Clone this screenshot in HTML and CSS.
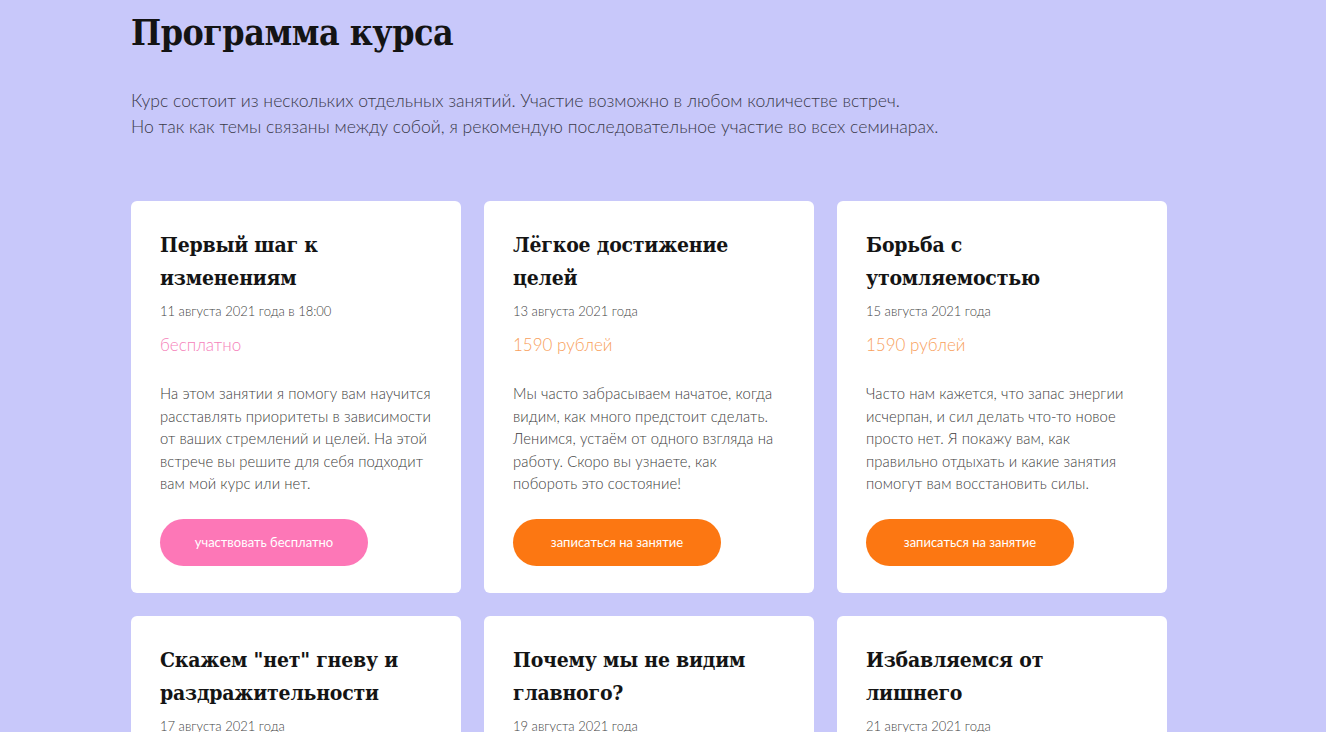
FILE: index.html
```html
<!DOCTYPE html>
<html lang="ru">
<head>
    <meta charset="UTF-8">
    <meta name="viewport" content="width=device-width, initial-scale=1.0">
    <title>Программа курса</title>
    <link rel="stylesheet" href="styles.css">
</head>
<body>
    <section class="program">
        <h1 class="program-title">Программа курса</h1>
        <p class="program-intro">
            Курс состоит из нескольких отдельных занятий. Участие возможно в любом количестве встреч.<br>
            Но так как темы связаны между собой, я рекомендую последовательное участие во всех семинарах.
        </p>

        <div class="lessons">
            <div class="lesson">
                <h3 class="lesson-title">Первый шаг к изменениям</h3>
                <div class="lesson-date">11 августа 2021 года в 18:00</div>
                <div class="lesson-price free">бесплатно</div>
                <p class="lesson-text">На этом занятии я помогу вам научится расставлять приоритеты в зависимости от ваших стремлений и целей. На этой встрече вы решите для себя подходит вам мой курс или нет.</p>
                <a class="lesson-btn free" href="#">участвовать бесплатно</a>
            </div>
            <div class="lesson">
                <h3 class="lesson-title">Лёгкое достижение целей</h3>
                <div class="lesson-date">13 августа 2021 года</div>
                <div class="lesson-price">1590 рублей</div>
                <p class="lesson-text">Мы часто забрасываем начатое, когда видим, как много предстоит сделать. Ленимся, устаём от одного взгляда на работу. Скоро вы узнаете, как побороть это состояние!</p>
                <a class="lesson-btn" href="#">записаться на занятие</a>
            </div>
            <div class="lesson">
                <h3 class="lesson-title">Борьба с утомляемостью</h3>
                <div class="lesson-date">15 августа 2021 года</div>
                <div class="lesson-price">1590 рублей</div>
                <p class="lesson-text">Часто нам кажется, что запас энергии исчерпан, и сил делать что-то новое просто нет. Я покажу вам, как правильно отдыхать и какие занятия помогут вам восстановить силы.</p>
                <a class="lesson-btn" href="#">записаться на занятие</a>
            </div>
            <div class="lesson">
                <h3 class="lesson-title">Скажем "нет" гневу и раздражительности</h3>
                <div class="lesson-date">17 августа 2021 года</div>
                <div class="lesson-price">1590 рублей</div>
                <p class="lesson-text">Раздражение копится день за днём и мешает нам радоваться жизни. Вместе мы разберём, откуда оно берётся и как с ним справиться.</p>
                <a class="lesson-btn" href="#">записаться на занятие</a>
            </div>
            <div class="lesson">
                <h3 class="lesson-title">Почему мы не видим главного?</h3>
                <div class="lesson-date">19 августа 2021 года</div>
                <div class="lesson-price">1590 рублей</div>
                <p class="lesson-text">Мы тратим силы на мелочи и упускаем то, что действительно важно. Научимся отделять главное от второстепенного.</p>
                <a class="lesson-btn" href="#">записаться на занятие</a>
            </div>
            <div class="lesson">
                <h3 class="lesson-title">Избавляемся от лишнего</h3>
                <div class="lesson-date">21 августа 2021 года</div>
                <div class="lesson-price">1590 рублей</div>
                <p class="lesson-text">Лишние дела, вещи и мысли отнимают энергию. На последней встрече мы подведём итоги и наведём порядок.</p>
                <a class="lesson-btn" href="#">записаться на занятие</a>
            </div>
        </div>
    </section>
</body>
</html>
```

FILE: styles.css
```css
body {
    margin: 0;
    background-color: #c8c8fa;
    font-family: "Lato", "Open Sans", sans-serif;
    font-weight: 300;
    color: #333;
}
.program {
    width: 1036px;
    margin: 0 auto;
    padding: 10px 0 40px;
    position: relative;
    left: -14px;
}
.program-title {
    font-family: "DejaVu Serif Condensed", "DejaVu Serif", serif;
    font-stretch: condensed;
    font-weight: 700;
    font-size: 35.5px;
    letter-spacing: -0.5px;
    color: #141414;
    margin: 0;
    line-height: 46px;
}
.program-intro {
    font-size: 17.6px;
    line-height: 26px;
    color: #3a3a4a;
    margin: 32px 0 0;
}
.lessons {
    display: grid;
    grid-template-columns: repeat(3, 330px);
    gap: 23px;
    margin-top: 61px;
}
.lesson {
    background-color: #fff;
    border-radius: 6px;
    padding: 27px 29px 27px;
    display: flex;
    flex-direction: column;
    align-items: flex-start;
}
.lesson-title {
    font-family: "DejaVu Serif Condensed", "DejaVu Serif", serif;
    font-stretch: condensed;
    font-weight: 700;
    font-size: 21px;
    letter-spacing: -0.2px;
    line-height: 33px;
    color: #141414;
    margin: 0;
}
.lesson-date {
    font-size: 13px;
    color: #444;
    margin-top: 9px;
}
.lesson-price {
    font-size: 17px;
    color: #f8a05c;
    margin-top: 15px;
}
.lesson-price.free {
    color: #f582ba;
}
.lesson-text {
    font-size: 14.8px;
    line-height: 22.5px;
    letter-spacing: 0.1px;
    color: #3d3d3d;
    margin: 27px 0 0;
}
.lesson-btn {
    display: block;
    margin-top: 24px;
    width: 208px;
    height: 47px;
    line-height: 47px;
    border-radius: 24px;
    background-color: #fc7712;
    color: #fff;
    text-align: center;
    text-decoration: none;
    font-size: 13px;
    font-weight: 400;
}
.lesson-btn.free {
    background-color: #fd77b7;
}
```
